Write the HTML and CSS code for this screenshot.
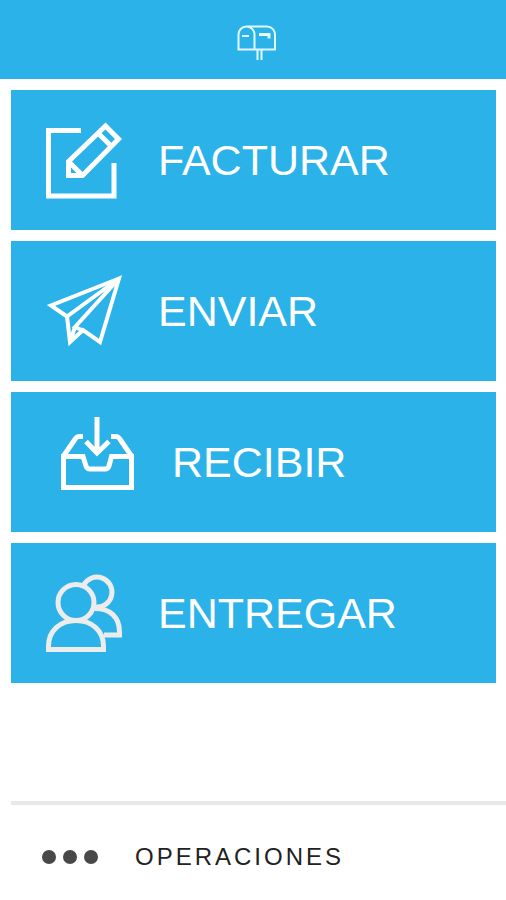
FILE: index.html
```
<!DOCTYPE html>
<html lang="es">
<head>
    <meta charset="UTF-8">
    <meta name="viewport" content="width=device-width, initial-scale=1.0">
    <title>Buzón</title>
    <link rel="stylesheet" href="styles.css">
</head>
<body>

    <header class="cabecera">
        <svg class="logo" viewBox="0 0 40 36" aria-hidden="true">
            <path d="M9.500 1.500H30a8 8 0 0 1 8 8v15H1.500v-15a8 8 0 0 1 16 0v15M1.500 10a8 8 0 0 1 8 -8.500"/>
            <path d="M5 11h7M20.500 25v10M24.500 25v10"/>
            <path class="bandera" d="M22 9.500h10v4"/>
        </svg>
    </header>

    <!-- Menú principal -->
    <main class="menu">
        <button type="button" class="opcion">
            <svg class="icono" viewBox="0 0 76 76" aria-hidden="true">
                <path d="M35 8.500H2.500V74H68V41"/>
                <path d="M22.500 39.500L59.500 4L72.500 17L36.500 53.500H22.500z"/>
                <path d="M23 40L36 53M52 11L65 24"/>
            </svg>
            <span>FACTURAR</span>
        </button>

        <button type="button" class="opcion">
            <svg class="icono icono-fino" viewBox="0 0 76 76" aria-hidden="true">
                <path d="M73 5.500L5 32.500L21 43.500L24 69L37 57L54 69z"/>
                <path d="M21 43.500L73 5.500L29 54L38 58M29 54L24 69"/>
            </svg>
            <span>ENVIAR</span>
        </button>

        <button type="button" class="opcion opcion-recibir">
            <svg class="icono icono-alto" viewBox="0 -8 76 92" aria-hidden="true">
                <path d="M3.500 32.500V63.500H71.500V32.500H51.500L49 42Q48 45 45 45H30Q27 45 26 42L23 32.500z"/>
                <path d="M3.500 32L15.500 14.500Q17 12.500 19 12.500H23M71.500 32L59.500 14.500Q58 12.500 56 12.500H51"/>
                <path d="M37 -7V29M26 17.500L37 29L49 17.500"/>
            </svg>
            <span>RECIBIR</span>
        </button>

        <button type="button" class="opcion">
            <svg class="icono icono-gris" viewBox="0 0 76 77" aria-hidden="true">
                <circle cx="30" cy="27.500" r="18"/>
                <path d="M2.500 74.500V71C2.500 56 14 45.500 30 45.500S57.500 56 57.500 71V74.500z"/>
                <path d="M37.500 10.500A15 15 0 1 1 50 32"/>
                <path d="M49 33.500C64 33.500 73.500 42 73.500 57V60H58"/>
            </svg>
            <span>ENTREGAR</span>
        </button>
    </main>

    <!-- Pie con más operaciones -->
    <footer class="pie">
        <button type="button" class="operaciones">
            <svg class="puntos" viewBox="0 0 56 14" aria-hidden="true">
                <circle cx="7" cy="7" r="7"/>
                <circle cx="28" cy="7" r="7"/>
                <circle cx="49" cy="7" r="7"/>
            </svg>
            <span>OPERACIONES</span>
        </button>
    </footer>

</body>
</html>
```
FILE: styles.css
```
body {
    display: flex;
    flex-direction: column;
    min-height: 100vh;
    margin: 0;
    background-color: #fff;
    font-family: "Liberation Sans", Arial, sans-serif;
}

button {
    border: none;
    padding: 0;
    font-family: inherit;
    text-align: left;
    cursor: pointer;
}

svg {
    flex: none;
    fill: none;
    overflow: visible;
}

.cabecera {
    display: flex;
    justify-content: center;
    padding: 25px 0 18px 8px;
    background-color: #2ab2e9;
}

.logo {
    width: 40px;
    height: 36px;
    stroke: #e4fbff;
    stroke-width: 2;
}

.bandera {
    stroke-width: 3;
}

.menu {
    display: flex;
    flex-direction: column;
    gap: 11px;
    padding: 11px 10px 11px 11px;
}

.opcion {
    display: flex;
    align-items: center;
    gap: 36px;
    height: 140px;
    padding-left: 35px;
    background-color: #2ab2e9;
    color: #fff;
    font-size: 43px;
}

/* La bandeja va un poco más adentro que el resto */
.opcion-recibir {
    padding-left: 49px;
}

.icono {
    width: 76px;
    height: 76px;
    stroke: #fff;
    stroke-width: 5;
}

.icono-fino {
    stroke-width: 4;
}

.icono-alto {
    height: 92px;
}

.icono-gris {
    height: 77px;
    stroke: #ececec;
}

.pie {
    margin-top: auto;
    margin-left: 11px;
    padding: 40px 0 31px 31px;
    border-top: 4px solid #e8e8e8;
}

.operaciones {
    display: flex;
    align-items: center;
    gap: 37px;
    background: none;
    color: #222;
    font-size: 24px;
    line-height: 24px;
    letter-spacing: 3px;
}

.puntos {
    width: 56px;
    height: 14px;
    fill: #484848;
}
```
